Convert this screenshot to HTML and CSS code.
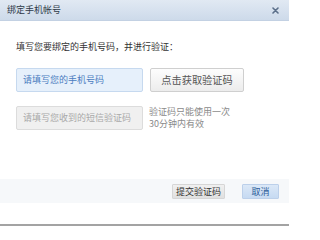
FILE: index.html
```html
<!DOCTYPE html>
<html>
<head>
<meta charset="utf-8">
<link rel="stylesheet" href="styles.css">
</head>
<body>
<div class="dialog">
  <div class="header">
    <span class="title">绑定手机帐号</span>
    <span class="close"><svg width="7" height="7" viewBox="0 0 7 7"><path d="M1 1L6 6M6 1L1 6" stroke="#5b6f8a" stroke-width="1.6" stroke-linecap="round"/></svg></span>
  </div>
  <div class="content">
    <div class="intro">填写您要绑定的手机号码，并进行验证：</div>
    <div class="row row-phone">
      <div class="field field-phone">请填写您的手机号码</div>
      <div class="btn-code">点击获取验证码</div>
    </div>
    <div class="row row-sms">
      <div class="field field-sms">请填写您收到的短信验证码</div>
      <div class="hint">验证码只能使用一次<br>30分钟内有效</div>
    </div>
  </div>
  <div class="footer">
    <div class="btn btn-submit">提交验证码</div>
    <div class="btn btn-cancel">取消</div>
  </div>
  <div class="spacer"></div>
  <div class="bottom-bar"></div>
</div>
</body>
</html>
```
FILE: styles.css
```css
html, body {
  margin: 0;
  padding: 0;
  background: #ffffff;
}
body {
  font-family: "Noto Sans CJK SC", "Noto Sans", sans-serif;
  color: #333;
}
.dialog {
  width: 289px;
  height: 226px;
  display: flex;
  flex-direction: column;
  background: #fff;
}
.header {
  height: 20px;
  flex: none;
  display: flex;
  align-items: center;
  justify-content: space-between;
  padding: 0 10px 0 7px;
  background: linear-gradient(#e1e9f3, #cddaea);
  border-bottom: 1px solid #c3d1e3;
}
.title {
  font-size: 9px;
  line-height: 20px;
  color: #2e3a48;
}
.close {
  display: flex;
  align-items: center;
}
.content {
  padding: 20px 0 0 16px;
  flex: none;
}
.intro {
  font-size: 9px;
  line-height: 12px;
  color: #333;
  padding-left: 0;
}
.row {
  display: flex;
  align-items: flex-start;
}
.row-phone {
  margin-top: 15px;
}
.row-sms {
  margin-top: 14px;
}
.field {
  box-sizing: border-box;
  width: 127px;
  height: 24px;
  padding-left: 6px;
  font-size: 9px;
  line-height: 22px;
  border-radius: 2px;
}
.field-phone {
  background: #e6f0fb;
  border: 1px solid #c6d9ef;
  color: #4a7cbf;
}
.field-sms {
  background: #f0f0f0;
  border: 1px solid #dcdcdc;
  color: #a9a9a9;
}
.btn-code {
  box-sizing: border-box;
  margin-left: 7px;
  width: 94px;
  height: 24px;
  text-align: center;
  font-size: 10.2px;
  line-height: 22px;
  color: #555;
  background: linear-gradient(#fdfdfd, #ececec);
  border: 1px solid #cfcfcf;
  border-radius: 2px;
}
.hint {
  margin-left: 6px;
  font-size: 9px;
  line-height: 12px;
  color: #8a8a8a;
}
.footer {
  margin-top: 49px;
  height: 24px;
  flex: none;
  display: flex;
  align-items: center;
  justify-content: flex-end;
  padding-right: 10px;
  background: #f6f8fa;
}
.btn {
  box-sizing: border-box;
  height: 15px;
  font-size: 9px;
  line-height: 14px;
  text-align: center;
  border-radius: 1px;
}
.btn-submit {
  width: 53px;
  background: linear-gradient(#f0f0f0, #e0e0e0);
  border: 1px solid #d6d6d6;
  color: #333;
}
.btn-cancel {
  width: 37px;
  margin-left: 17px;
  background: linear-gradient(#dbe8f7, #c6daf2);
  border: 1px solid #bcd0ea;
  color: #2c5d99;
}
.spacer {
  flex: 1;
}
.bottom-bar {
  height: 2px;
  flex: none;
  background: #a3a3a3;
}
```
